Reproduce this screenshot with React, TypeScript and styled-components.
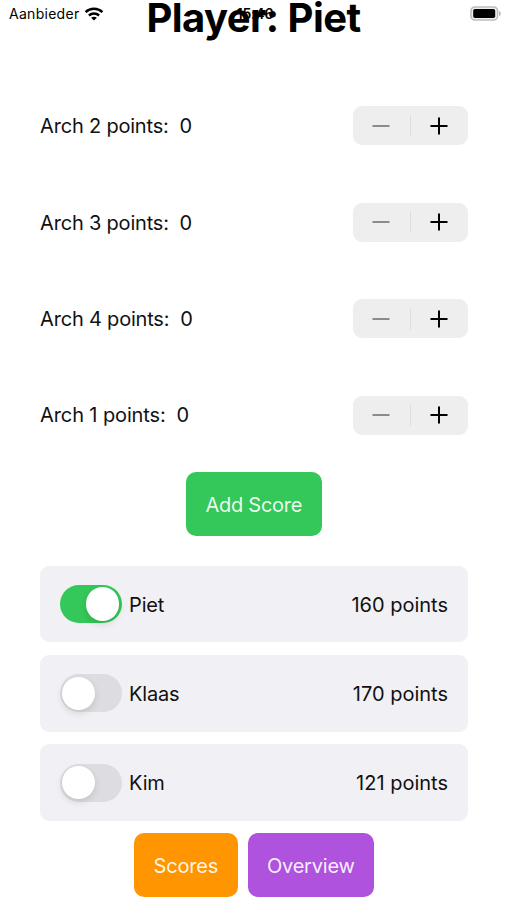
import React, { useState } from "react";
import styled, { createGlobalStyle } from "styled-components";

const GlobalStyle = createGlobalStyle`
  * { box-sizing: border-box; }
  body { margin: 0; background: #fff; }
  button { border: 0; padding: 0; margin: 0; font: inherit; cursor: pointer; }
`;

const Screen = styled.main`
  position: relative;
  width: 507px;
  height: 900px;
  overflow: hidden;
  background: #fff;
  color: #111;
  font-family: Inter, "Liberation Sans", sans-serif;
  font-size: 20px;
  display: flex;
  flex-direction: column;
  align-items: center;
`;

const StatusBar = styled.header`
  position: absolute;
  inset: 0 0 auto 0;
  height: 27px;
  padding: 0 6px 0 9px;
  display: grid;
  grid-template-columns: 1fr auto 1fr;
  align-items: center;
  font-size: 14px;
  color: #000;
`;

const Carrier = styled.div`
  display: flex;
  align-items: center;
  gap: 5px;
  letter-spacing: 0.28px;
`;

const Time = styled.span`
  font-size: 14px;
  font-weight: 600;
  letter-spacing: -0.2px;
`;

const BatteryIcon = styled.svg`
  justify-self: end;
`;

const Title = styled.h1`
  margin: 0;
  height: 77.7px;
  line-height: 36px;
  font-size: 40px;
  font-weight: 700;
  letter-spacing: -0.55px;
  color: #000;
  white-space: nowrap;
`;

const Arches = styled.section`
  width: 428px;
  display: grid;
  grid-auto-rows: 96.4px;
`;

const ArchRow = styled.div`
  display: flex;
  align-items: center;
  justify-content: space-between;
`;

const ArchLabel = styled.span<{ $spacing: number }>`
  padding: 0.6px 0 0 0.6px;
  white-space: pre;
  letter-spacing: ${(p) => p.$spacing}px;
`;

const Stepper = styled.div`
  width: 115px;
  height: 39px;
  border-radius: 9px;
  background: #eeeeef;
  display: grid;
  grid-template-columns: 57px 1px 57px;
  align-items: center;
`;

const StepButton = styled.button<{ $dim?: boolean }>`
  height: 39px;
  display: grid;
  place-items: center;
  background: transparent;
  color: ${(p) => (p.$dim ? "#8b8b8c" : "#000")};
`;

const Divider = styled.i`
  width: 1.5px;
  height: 22px;
  background: #dedee0;
`;

const ActionButton = styled.button<{ $color: string; $width: number; $spacing: number }>`
  width: ${(p) => p.$width}px;
  height: 64px;
  padding: 1px 0 0 0.6px;
  border-radius: 10px;
  background: ${(p) => p.$color};
  color: rgba(255, 255, 255, 0.92);
  letter-spacing: ${(p) => p.$spacing}px;
`;

const AddArea = styled.div`
  padding: 9.2px 0 29.5px;
  display: flex;
`;

const Players = styled.section`
  width: 428px;
  display: flex;
  flex-direction: column;
  gap: 12.7px;
`;

const PlayerCard = styled.div`
  height: 76.5px;
  padding: 0 19.5px 0 20px;
  border-radius: 9px;
  background: #f1f0f5;
  display: flex;
  align-items: center;
`;

const Toggle = styled.button<{ $on: boolean }>`
  width: 62px;
  height: 38px;
  padding: 2.3px;
  border-radius: 19px;
  background: ${(p) => (p.$on ? "#34c759" : "#dddce1")};
  display: flex;
  justify-content: ${(p) => (p.$on ? "flex-end" : "flex-start")};
`;

const Knob = styled.span`
  width: 33.4px;
  height: 33.4px;
  border-radius: 50%;
  background: #fff;
  box-shadow: 0 3px 7px rgba(0, 0, 0, 0.12);
`;

const PlayerName = styled.span`
  padding-top: 1px;
  margin-left: 7.6px;
  letter-spacing: -0.2px;
`;

const Points = styled.span<{ $spacing: number }>`
  padding-top: 1px;
  margin-left: auto;
  letter-spacing: ${(p) => p.$spacing}px;
`;

const Navigation = styled.nav`
  margin-top: 12.3px;
  display: flex;
  gap: 10px;
`;

const arches = [
  { id: 2, spacing: -0.2 },
  { id: 3, spacing: -0.2 },
  { id: 4, spacing: -0.2 },
  { id: 1, spacing: -0.12 },
];

const players = [
  { name: "Piet", points: 160, spacing: 0 },
  { name: "Klaas", points: 170, spacing: 0 },
  { name: "Kim", points: 121, spacing: 0 },
];

function Wifi() {
  return (
    <svg width="20" height="14" viewBox="0 0 20 14" fill="none" stroke="#000">
      <path d="M1.6 5.2C6.3.7 13.7.7 18.4 5.2" strokeWidth="2.5" />
      <path d="M4.9 8.5c2.9-2.7 7.3-2.7 10.2 0" strokeWidth="2.4" />
      <path d="M10 13.5 7.1 10.7c1.7-1.4 4.1-1.4 5.8 0Z" fill="#000" stroke="none" />
    </svg>
  );
}

function Battery() {
  return (
    <BatteryIcon width="31" height="15" viewBox="0 0 31 15">
      <rect x="1" y="1" width="26.6" height="13" rx="4" fill="#eee" stroke="#bdbdbd" strokeWidth="1.6" />
      <rect x="3.2" y="3" width="22" height="9" rx="1.8" fill="#000" />
      <path d="M29 5c2.4.8 2.4 4.2 0 5Z" fill="#b5b5b5" />
    </BatteryIcon>
  );
}

export default function App() {
  const [scores, setScores] = useState<Record<number, number>>({ 1: 0, 2: 0, 3: 0, 4: 0 });
  const [active, setActive] = useState("Piet");
  const step = (id: number, by: number) =>
    setScores((s) => ({ ...s, [id]: Math.max(0, s[id] + by) }));

  return (
    <Screen>
      <GlobalStyle />
      <Title>Player: Piet</Title>
      <StatusBar>
        <Carrier>Aanbieder <Wifi /></Carrier>
        <Time>15:46</Time>
        <Battery />
      </StatusBar>
      <Arches>
        {arches.map(({ id, spacing }) => (
          <ArchRow key={id}>
            <ArchLabel $spacing={spacing}>{`Arch ${id} points:  ${scores[id]}`}</ArchLabel>
            <Stepper>
              <StepButton $dim={scores[id] === 0} aria-label="Decrease" onClick={() => step(id, -1)}>
                <svg width="18" height="18" viewBox="0 0 18 18" stroke="currentColor" strokeWidth="2">
                  <path d="M.5 9h17" />
                </svg>
              </StepButton>
              <Divider />
              <StepButton aria-label="Increase" onClick={() => step(id, 1)}>
                <svg width="18" height="18" viewBox="0 0 18 18" stroke="currentColor" strokeWidth="2">
                  <path d="M.5 9h17M9 .5v17" />
                </svg>
              </StepButton>
            </Stepper>
          </ArchRow>
        ))}
      </Arches>
      <AddArea>
        <ActionButton $color="#34c759" $width={136} $spacing={-0.25}>Add Score</ActionButton>
      </AddArea>
      <Players>
        {players.map((p) => (
          <PlayerCard key={p.name}>
            <Toggle
              $on={active === p.name}
              role="switch"
              aria-checked={active === p.name}
              aria-label={p.name}
              onClick={() => setActive(p.name)}
            >
              <Knob />
            </Toggle>
            <PlayerName>{p.name}</PlayerName>
            <Points $spacing={p.spacing}>{p.points} points</Points>
          </PlayerCard>
        ))}
      </Players>
      <Navigation>
        <ActionButton $color="#ff9500" $width={104} $spacing={-0.2}>Scores</ActionButton>
        <ActionButton $color="#af52de" $width={126} $spacing={-0.2}>Overview</ActionButton>
      </Navigation>
    </Screen>
  );
}
